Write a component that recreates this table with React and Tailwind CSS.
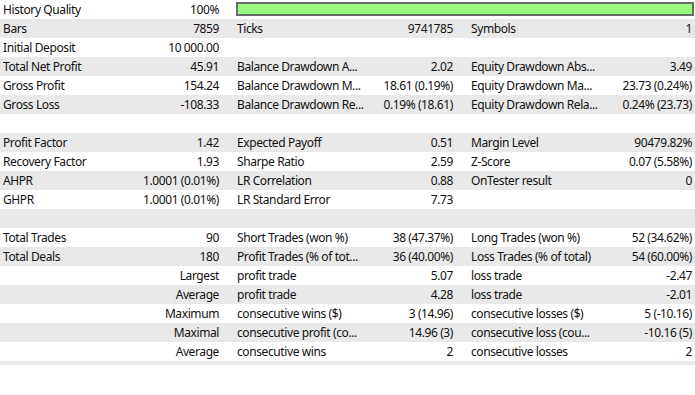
import React from "react";

const rows = [
  ["History Quality", "100%", "BAR"],
  ["Bars", "7859", "Ticks", "9741785", "Symbols", "1"],
  ["Initial Deposit", "10 000.00", "", "", "", ""],
  ["Total Net Profit", "45.91", "Balance Drawdown A...", "2.02", "Equity Drawdown Abs...", "3.49"],
  ["Gross Profit", "154.24", "Balance Drawdown M...", "18.61 (0.19%)", "Equity Drawdown Ma...", "23.73 (0.24%)"],
  ["Gross Loss", "-108.33", "Balance Drawdown Re...", "0.19% (18.61)", "Equity Drawdown Rela...", "0.24% (23.73)"],
  ["", "", "", "", "", ""],
  ["Profit Factor", "1.42", "Expected Payoff", "0.51", "Margin Level", "90479.82%"],
  ["Recovery Factor", "1.93", "Sharpe Ratio", "2.59", "Z-Score", "0.07 (5.58%)"],
  ["AHPR", "1.0001 (0.01%)", "LR Correlation", "0.88", "OnTester result", "0"],
  ["GHPR", "1.0001 (0.01%)", "LR Standard Error", "7.73", "", ""],
  ["", "", "", "", "", ""],
  ["Total Trades", "90", "Short Trades (won %)", "38 (47.37%)", "Long Trades (won %)", "52 (34.62%)"],
  ["Total Deals", "180", "Profit Trades (% of tot...", "36 (40.00%)", "Loss Trades (% of total)", "54 (60.00%)"],
  ["", "Largest", "profit trade", "5.07", "loss trade", "-2.47"],
  ["", "Average", "profit trade", "4.28", "loss trade", "-2.01"],
  ["", "Maximum", "consecutive wins ($)", "3 (14.96)", "consecutive losses ($)", "5 (-10.16)"],
  ["", "Maximal", "consecutive profit (co...", "14.96 (3)", "consecutive loss (cou...", "-10.16 (5)"],
  ["", "Average", "consecutive wins", "2", "consecutive losses", "2"],
];

function Row({ cells, shaded }) {
  const bg = shaded ? "bg-[#e9e9e9]" : "bg-white";
  if (cells[2] === "BAR") {
    return (
      <div className={`grid grid-cols-[120px_114px_1fr] h-[19px] ${bg}`}>
        <div className="pl-[3px] whitespace-nowrap">{cells[0]}</div>
        <div className="pr-[15px] text-right whitespace-nowrap">{cells[1]}</div>
        <div className="pl-[2px] pr-[1px] py-[2px]">
          <div className="h-[14px] border-2 border-[#6a6a6a] bg-[#98fb80]" />
        </div>
      </div>
    );
  }
  return (
    <div className={`grid grid-cols-[120px_114px_120px_114px_120px_1fr] h-[19px] ${bg}`}>
      <div className="pl-[3px] whitespace-nowrap">{cells[0]}</div>
      <div className="pr-[15px] text-right whitespace-nowrap">{cells[1]}</div>
      <div className="pl-[3px] whitespace-nowrap">{cells[2]}</div>
      <div className="pr-[15px] text-right whitespace-nowrap">{cells[3]}</div>
      <div className="pl-[3px] whitespace-nowrap">{cells[4]}</div>
      <div className="pr-[3px] text-right whitespace-nowrap">{cells[5]}</div>
    </div>
  );
}

export default function App() {
  return (
    <div
      className="w-[695px] h-[395px] bg-white text-[#111] text-[12px] leading-[19px] tracking-[-0.4px] overflow-hidden"
      style={{ fontFamily: '"Noto Sans", "Open Sans", sans-serif' }}
    >
      {rows.map((r, i) => (
        <Row key={i} cells={r} shaded={i % 2 === 1} />
      ))}
      <div className="h-[4px] bg-[#e9e9e9]" />
    </div>
  );
}
